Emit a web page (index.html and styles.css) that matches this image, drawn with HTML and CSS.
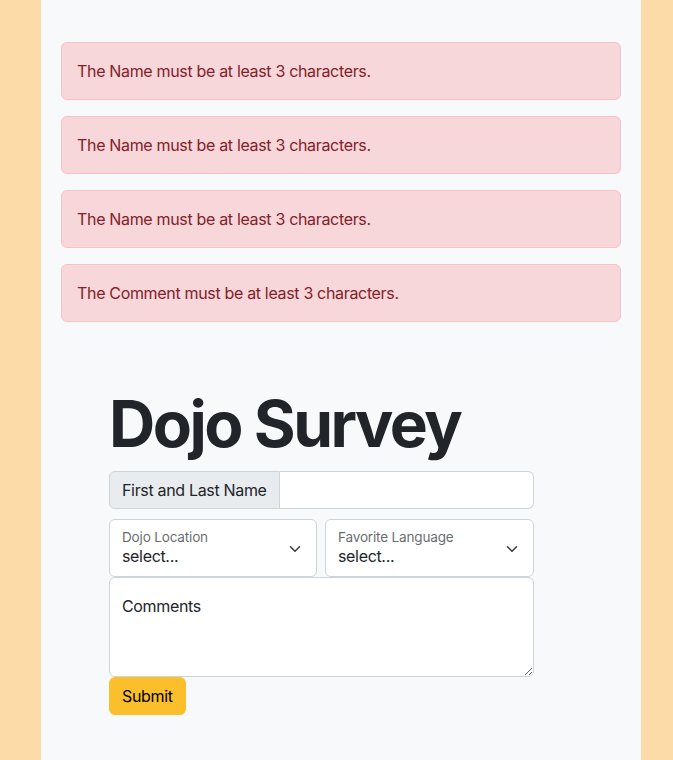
FILE: index.html
```html
<!DOCTYPE html>
<html lang="en">
<head>
<meta charset="utf-8">
<title>Dojo Survey</title>
<link rel="stylesheet" href="styles.css">
</head>
<body>
<main class="page">
  <div class="alerts">
    <div class="alert">The Name must be at least 3 characters.</div>
    <div class="alert">The Name must be at least 3 characters.</div>
    <div class="alert">The Name must be at least 3 characters.</div>
    <div class="alert">The Comment must be at least 3 characters.</div>
  </div>
  <form class="survey">
    <h1 class="title">Dojo Survey</h1>
    <div class="input-group">
      <span class="input-label">First and Last Name</span>
      <input class="input-text" type="text">
    </div>
    <div class="selects">
      <div class="select-box">
        <div class="select-text">
          <span class="select-label">Dojo Location</span>
          <span class="select-value">select...</span>
        </div>
        <svg class="chevron" viewBox="0 0 16 16" width="16" height="12"><path d="m2 5 6 6 6-6" fill="none" stroke="#343a40" stroke-width="2" stroke-linecap="round" stroke-linejoin="round"/></svg>
      </div>
      <div class="select-box">
        <div class="select-text">
          <span class="select-label">Favorite Language</span>
          <span class="select-value">select...</span>
        </div>
        <svg class="chevron" viewBox="0 0 16 16" width="16" height="12"><path d="m2 5 6 6 6-6" fill="none" stroke="#343a40" stroke-width="2" stroke-linecap="round" stroke-linejoin="round"/></svg>
      </div>
    </div>
    <textarea class="comments" placeholder="Comments"></textarea>
    <button class="submit" type="button">Submit</button>
  </form>
</main>
</body>
</html>
```

FILE: styles.css
```css
* { box-sizing: border-box; }
html, body { margin: 0; padding: 0; }
body {
  background: #fcdba8;
  font-family: Inter, "Noto Sans", sans-serif;
  font-size: 16px;
  line-height: 24px;
  letter-spacing: -0.33px;
  color: #212529;
}
.page {
  margin-left: 41px;
  width: 600px;
  min-height: 760px;
  background: #f8f9fa;
  padding: 42px 20px 20px;
}
.alerts {
  display: flex;
  flex-direction: column;
  gap: 16px;
}
.alert {
  background: #f8d7da;
  border: 1px solid #f5c2c7;
  color: #842029;
  border-radius: 6px;
  padding: 16px 16px 16px 15px;
  height: 58px;
}
.survey {
  margin: 64px 0 0 48px;
  width: 425px;
  display: flex;
  flex-direction: column;
  align-items: flex-start;
}
.title {
  margin: 0 0 8px;
  font-size: 64px;
  line-height: 1.2;
  font-weight: 700;
  letter-spacing: -2.5px;
  color: #212529;
}
.input-group {
  display: flex;
  width: 100%;
  height: 38px;
  margin-bottom: 10px;
}
.input-label {
  background: #e9ecef;
  border: 1px solid #ced4da;
  border-radius: 6px 0 0 6px;
  padding: 6px 12px;
  white-space: nowrap;
}
.input-text {
  flex: 1;
  width: 0;
  min-width: 0;
  border: 1px solid #ced4da;
  border-left: none;
  border-radius: 0 6px 6px 0;
  background: #fff;
  font: inherit;
}
.selects {
  display: grid;
  grid-template-columns: 208px 209px;
  gap: 8px;
  width: 100%;
}
.select-box {
  height: 58px;
  background: #fff;
  border: 1px solid #ced4da;
  border-radius: 6px;
  display: flex;
  align-items: center;
  justify-content: space-between;
  padding: 0 13px 0 12px;
}
.select-text {
  display: flex;
  flex-direction: column;
}
.select-label {
  font-size: 13.6px;
  line-height: 16px;
  letter-spacing: -0.2px;
  color: rgba(33, 37, 41, 0.7);
}
.select-value {
  font-size: 16px;
  line-height: 22px;
}
.chevron { display: block; margin-top: 2px; }
.comments {
  width: 100%;
  height: 100px;
  border: 1px solid #ced4da;
  border-radius: 6px;
  background: #fff;
  padding: 16px 12px;
  font: inherit;
  letter-spacing: -0.33px;
  resize: vertical;
}
.comments::placeholder { color: #212529; opacity: 1; }
.submit {
  background: #fbbf2c;
  border: 1px solid #fbbf2c;
  border-radius: 6px;
  padding: 6px 12px;
  font: inherit;
  letter-spacing: -0.33px;
  color: #000;
  height: 38px;
}
```
